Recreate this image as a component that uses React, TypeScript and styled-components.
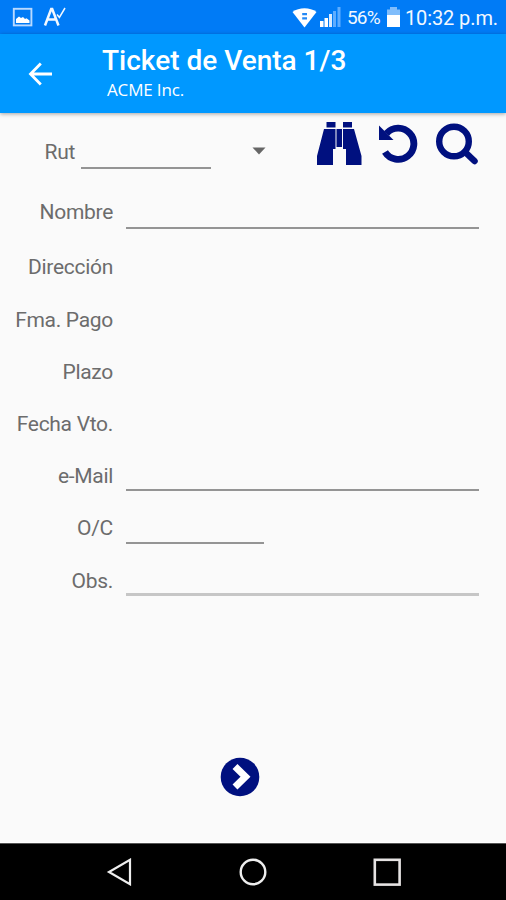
import React from 'react';
import styled, { createGlobalStyle } from 'styled-components';

const NAVY = '#00107f';

const GlobalStyle = createGlobalStyle`
  *, *::before, *::after { box-sizing: border-box; }
  body { margin: 0; background: #fafafa; font-family: Roboto, sans-serif; }
  svg { display: block; flex: none; }
`;

const Screen = styled.div`
  width: 506px;
  height: 900px;
  display: flex;
  flex-direction: column;
  overflow: hidden;
  background: #fafafa;
`;

const StatusBar = styled.div`
  height: 34px;
  flex: none;
  display: flex;
  align-items: center;
  padding: 0 8px 0 12px;
  background: #007bf6;
  color: #f2f8ff;
`;

const StatusIcons = styled.div`
  display: flex;
  gap: 10px;
  margin-right: auto;
`;

const StatusText = styled.span<{ $size: number; $spacing: number; $left: number }>`
  font-size: ${(p) => p.$size}px;
  letter-spacing: ${(p) => p.$spacing}px;
  margin-left: ${(p) => p.$left}px;
  line-height: 34px;
  padding-top: 2px;
  white-space: nowrap;
`;

const AppBar = styled.header`
  height: 79px;
  flex: none;
  display: flex;
  background: #0098ff;
  color: #fff;
  box-shadow: 0 1px 4px rgba(0, 0, 0, 0.35);
  z-index: 1;
`;

const BackButton = styled.button`
  width: 102px;
  height: 79px;
  padding: 0 0 0 28px;
  border: 0;
  background: none;
  color: inherit;
`;

const Titles = styled.div`
  padding-top: 10px;
  white-space: nowrap;
`;

const Title = styled.h1`
  margin: 0;
  font-size: 28px;
  line-height: 34px;
  font-weight: 500;
  letter-spacing: 0;
`;

const Subtitle = styled.div`
  margin: 1px 0 0 5px;
  font-family: 'Open Sans', sans-serif;
  font-size: 17px;
  line-height: 22px;
  letter-spacing: -0.15px;
`;

const Form = styled.main`
  flex: 1;
  padding-top: 8px;
  display: flex;
  flex-direction: column;
  border-bottom: 1px solid #fff;
`;

const Row = styled.div<{ $height: number }>`
  height: ${(p) => p.$height}px;
  flex: none;
  display: flex;
  align-items: center;
`;

const Label = styled.label<{ $width?: number; $drop?: number }>`
  width: ${(p) => p.$width ?? 113}px;
  flex: none;
  text-align: right;
  font-size: 21px;
  line-height: 26px;
  padding-top: ${(p) => p.$drop ?? 0}px;
  color: #6c6c6c;
  letter-spacing: -0.3px;
  white-space: nowrap;
`;

const Field = styled.input<{ $width: number; $height: number; $left: number; $light?: boolean }>`
  width: ${(p) => p.$width}px;
  height: ${(p) => p.$height}px;
  flex: none;
  margin-left: ${(p) => p.$left}px;
  padding: 0;
  border: 0;
  border-bottom: ${(p) => (p.$light ? '3px solid #c6c6c6' : '2px solid #949494')};
  border-radius: 0;
  outline: none;
  background: transparent;
  font: 21px Roboto, sans-serif;
`;

const Dropdown = styled.button`
  margin: 0 0 0 41px;
  padding: 0;
  border: 0;
  background: none;
`;

const Tools = styled.div`
  display: flex;
  align-items: center;
  gap: 16px;
  margin: -14px 0 0 50px;
`;

const Tool = styled.button`
  padding: 0;
  border: 0;
  background: none;
`;

const NextButton = styled.button`
  width: 40px;
  height: 40px;
  margin: auto 0 45px 220px;
  padding: 0;
  border: 0;
  background: none;
`;

const NavBar = styled.nav`
  height: 57px;
  flex: none;
  display: flex;
  justify-content: space-between;
  align-items: center;
  padding: 0 105px 1px 106px;
  background: #000;
  border-top: 1px solid #555;
`;

type RowSpec = {
  id: string;
  label: string;
  height: number;
  width?: number;
  field?: number;
  light?: boolean;
  drop?: number;
};

const rows: RowSpec[] = [
  { id: 'nombre', label: 'Nombre', height: 60, width: 353, field: 36, drop: 2 },
  { id: 'direccion', label: 'Dirección', height: 52 },
  { id: 'pago', label: 'Fma. Pago', height: 53 },
  { id: 'plazo', label: 'Plazo', height: 52 },
  { id: 'vto', label: 'Fecha Vto.', height: 51 },
  { id: 'mail', label: 'e-Mail', height: 53, width: 353, field: 31 },
  { id: 'oc', label: 'O/C', height: 52, width: 138, field: 32 },
  { id: 'obs', label: 'Obs.', height: 53, width: 353, field: 31, light: true },
];

export default function App() {
  return (
    <>
      <GlobalStyle />
      <Screen>
        <StatusBar>
          <StatusIcons>
            <svg width="21" height="20" viewBox="0 0 21 20">
              <rect x="1.8" y="1.8" width="17.6" height="16.6" fill="none" stroke="#b8d9ff" strokeWidth="1.9" />
              <path d="M4 16V12l3-2.500 2 1.500 2-1 2 2 1.500-.7L17.500 13.500V16z" fill="#fff" />
            </svg>
            <svg width="24" height="20" viewBox="0 0 24 20" fill="none" stroke="#f2f8ff">
              <path d="M2 18.500 8.200 2h1L15.500 18.500M4.200 12.500h9" strokeWidth="2.5" />
              <path d="m14 7.500 2.400 3L22 1" strokeWidth="1.5" />
            </svg>
          </StatusIcons>
          <svg width="25" height="21" viewBox="0 0 25 21">
            <path d="M.5 5C7 .1 18 .1 24.500 5L12.500 20.500Z" fill="#fff" />
            <path d="M10.200 6h4.800v2.200h-4.800zM10.200 10.300h4.800v2.200h-4.800z" fill="#2589f5" />
          </svg>
          <svg width="25" height="20" viewBox="-3 0 25 20">
            <path d="M0 14h3.500v6H0zM4.500 11H8v9H4.500z" fill="#fff" />
            <path d="M9 7h3v13H9z" fill="#d9ebff" />
            <path d="M13 4h3v16h-3zM17.500 0h3v20h-3z" fill="#5fadff" />
          </svg>
          <StatusText $size={19} $spacing={-0.75} $left={5}>56%</StatusText>
          <svg width="25" height="20" viewBox="-1 0 25 20">
            <path d="M9 0h7v2.500h3V9H6V2.500h3z" fill="#80bdfb" />
            <path d="M6 8h13v12H6z" fill="#fff" />
          </svg>
          <StatusText $size={20} $spacing={-0.1} $left={0}>10:32 p.m.</StatusText>
        </StatusBar>
        <AppBar>
          <BackButton aria-label="Volver">
            <svg width="25" height="24" viewBox="0 0 25 24" fill="none" stroke="#fff" strokeWidth="2.8">
              <path d="M12.800 1.500 2.500 12l10.300 10.500M2.500 12H24" />
            </svg>
          </BackButton>
          <Titles>
            <Title>Ticket de Venta 1/3</Title>
            <Subtitle>ACME Inc.</Subtitle>
          </Titles>
        </AppBar>
        <Form>
          <Row $height={60}>
            <Label $width={75} $drop={2} htmlFor="rut">Rut</Label>
            <Field id="rut" $width={130} $height={36} $left={6} />
            <Dropdown aria-label="Elegir">
              <svg width="14" height="8" viewBox="0 0 14 8"><path d="M.5.5h13L7 7.500z" fill="#666" /></svg>
            </Dropdown>
            <Tools>
              <Tool aria-label="Ver">
                <svg width="46" height="44" viewBox="0 0 46 44" fill={NAVY}>
                  <path d="M10.500 0h9v5.500h-9zM27 0h9v5.500h-9zM20.500 7h5.500V25h-5.500zM8 7h11.500V27H17v16H1V34zM27 7h11L45.500 34v9H30V27h-3z" />
                </svg>
              </Tool>
              <Tool aria-label="Deshacer">
                <svg width="40" height="40" viewBox="0 0 40 40">
                  <path d="M8.500 9.500A15.600 15.600 0 1 1 7 28" fill="none" stroke={NAVY} strokeWidth="6.900" />
                  <path d="M1 1.500V16h14.500z" fill={NAVY} />
                </svg>
              </Tool>
              <Tool aria-label="Buscar">
                <svg width="45" height="42" viewBox="-2 0 45 42" fill="none" stroke={NAVY} strokeWidth="6.400">
                  <circle cx="18" cy="18.500" r="14.800" />
                  <path d="m29 29 9.500 9" strokeWidth="6.500" strokeLinecap="round" />
                </svg>
              </Tool>
            </Tools>
          </Row>
          {rows.map((r) => (
            <Row key={r.id} $height={r.height}>
              <Label htmlFor={r.id} $drop={r.drop}>{r.label}</Label>
              {r.width && <Field id={r.id} $width={r.width} $height={r.field ?? 28} $left={13} $light={r.light} />}
            </Row>
          ))}
          <NextButton aria-label="Siguiente">
            <svg width="40" height="40" viewBox="0 0 40 40">
              <circle cx="20" cy="20" r="19.300" fill={NAVY} />
              <path d="m15 9.500 10.500 10.300L15 30.100" fill="none" stroke="#fff" strokeWidth="7" />
            </svg>
          </NextButton>
        </Form>
        <NavBar>
          <svg width="26" height="28" viewBox="0 0 26 28" fill="none" stroke="#eee" strokeWidth="2.2">
            <path d="M24 1.800v24.400L3 14z" />
          </svg>
          <svg width="28" height="28" viewBox="0 0 28 28" fill="none" stroke="#eee" strokeWidth="2.400">
            <circle cx="14" cy="14" r="12.300" />
          </svg>
          <svg width="28" height="28" viewBox="0 0 28 28" fill="none" stroke="#e6e3e3" strokeWidth="2.600">
            <rect x="1.800" y="1.800" width="24.800" height="24.800" />
          </svg>
        </NavBar>
      </Screen>
    </>
  );
}
